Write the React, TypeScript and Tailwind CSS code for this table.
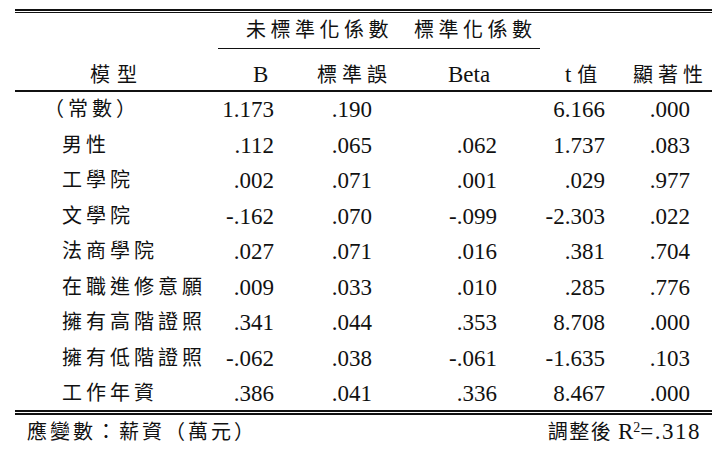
import React from "react";

const rows: string[][] = [
  ["（常數）", "1.173", ".190", "", "6.166", ".000"],
  ["男性", ".112", ".065", ".062", "1.737", ".083"],
  ["工學院", ".002", ".071", ".001", ".029", ".977"],
  ["文學院", "-.162", ".070", "-.099", "-2.303", ".022"],
  ["法商學院", ".027", ".071", ".016", ".381", ".704"],
  ["在職進修意願", ".009", ".033", ".010", ".285", ".776"],
  ["擁有高階證照", ".341", ".044", ".353", "8.708", ".000"],
  ["擁有低階證照", "-.062", ".038", "-.061", "-1.635", ".103"],
  ["工作年資", ".386", ".041", ".336", "8.467", ".000"],
];

const numPad = ["", "pr-[23px]", "pr-[30px]", "pr-[43px]", "pr-[22px]", "pr-[22px]"];

export default function App() {
  return (
    <div className="w-[728px] h-[455px] bg-white text-[#111] font-['Liberation_Serif','Noto_Sans_CJK_TC',serif] overflow-hidden">
      <div className="ml-[15px] w-[697px] pt-[9px] flex flex-col">
        {/* top double rule */}
        <div className="h-[2px] bg-[#111]" />
        <div className="h-px" />
        <div className="h-px bg-[#111]" />

        {/* header row 1 */}
        <div className="grid grid-cols-[203px_79px_105px_138px_87px_85px] h-[36px]">
          <div />
          <div className="col-span-2 border-b border-[#111] pl-[28px] text-[20px] leading-[35px] tracking-[4.5px]">
            未標準化係數
          </div>
          <div className="border-b border-[#111] pl-[12px] text-[20px] leading-[35px] tracking-[4.5px]">
            標準化係數
          </div>
          <div />
          <div />
        </div>

        {/* header row 2 */}
        <div className="grid grid-cols-[203px_79px_105px_138px_87px_85px] h-[43px] border-b-2 border-[#111]">
          <div className="flex items-end pb-[3px] pl-[75px] text-[20px] leading-[24px] tracking-[7px]">模型</div>
          <div className="flex items-end pb-[3px] pl-[35px] text-[23px] leading-[24px]">B</div>
          <div className="flex items-end pb-[3px] pl-[20px] text-[20px] leading-[24px] tracking-[5px]">標準誤</div>
          <div className="flex items-end pb-[3px] pl-[46px] text-[23px] leading-[24px]">Beta</div>
          <div className="flex items-end pb-[3px] pl-[25px] text-[23px] leading-[24px]">
            <span>t&nbsp;</span>
            <span className="text-[20px]">值</span>
          </div>
          <div className="flex items-end pb-[3px] pl-[6px] text-[20px] leading-[24px] tracking-[5px]">顯著性</div>
        </div>

        {/* data rows */}
        <div className="flex flex-col">
          {rows.map((r, i) => (
            <div key={i} className="grid grid-cols-[203px_79px_105px_138px_87px_85px] h-[35.5px]">
              <div
                className={
                  i === 0
                    ? "pl-[29px] text-[20px] leading-[35.5px] tracking-[4px] whitespace-nowrap"
                    : "pl-[47px] text-[20px] leading-[35.5px] tracking-[4px] whitespace-nowrap"
                }
              >
                {r[0]}
              </div>
              {r.slice(1).map((v, j) => (
                <div key={j} className={`text-right text-[23px] leading-[35.5px] ${numPad[j + 1]}`}>
                  {v}
                </div>
              ))}
            </div>
          ))}
        </div>

        {/* bottom double rule */}
        <div className="-mt-[2px] h-[2px] bg-[#111]" />
        <div className="h-[1.5px]" />
        <div className="h-[2px] bg-[#111]" />

        {/* footer */}
        <div className="flex justify-between h-[34px]">
          <div className="pl-[12px] text-[20px] leading-[34px] tracking-[3px]">應變數：薪資（萬元）</div>
          <div className="pr-[11px] leading-[34px] whitespace-nowrap">
            <span className="text-[20px] tracking-[1.5px]">調整後</span>
            <span className="text-[23px]"> R</span>
            <sup className="text-[14px]">2</sup>
            <span className="text-[23px] tracking-[1.5px]">=.318</span>
          </div>
        </div>
      </div>
    </div>
  );
}
